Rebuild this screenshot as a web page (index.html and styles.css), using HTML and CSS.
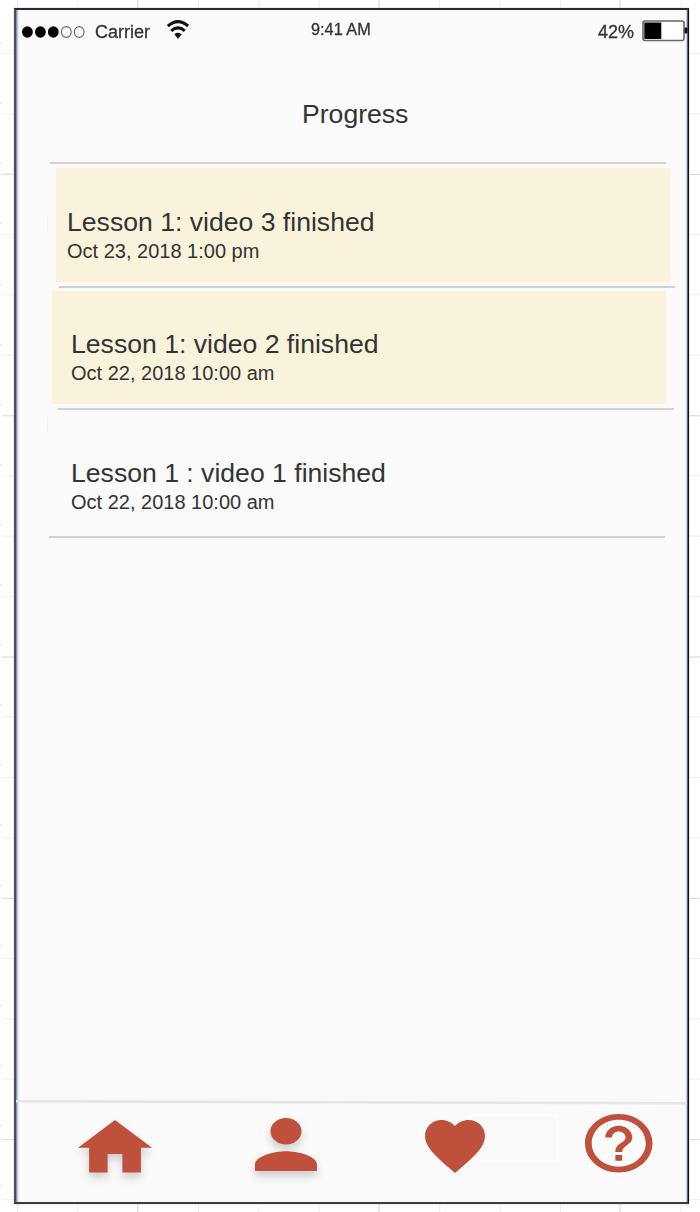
FILE: index.html
```html
<!DOCTYPE html>
<html lang="en">
<head>
<meta charset="utf-8">
<title>Progress</title>
<link rel="stylesheet" href="styles.css">
</head>
<body>
<div class="canvas">
  <div class="ruler"></div>
  <main class="phone">
    <header class="status">
      <div class="carrier">
        <svg class="signal" viewBox="0 0 64 14"><g fill="#000"><ellipse cx="5.4" cy="7" rx="5.4" ry="5.8"/><ellipse cx="18.4" cy="7" rx="5.4" ry="5.8"/><ellipse cx="31.3" cy="7" rx="5.4" ry="5.8"/></g><g fill="none" stroke="#666" stroke-width="1.1"><ellipse cx="44.3" cy="7" rx="4.9" ry="5.4"/><ellipse cx="57.2" cy="7" rx="4.9" ry="5.4"/></g></svg>
        <span class="carrier-name">Carrier</span>
        <svg class="wifi" viewBox="0 0 22 19"><g fill="none" stroke="#111" stroke-width="3"><path d="M.8 6Q11-2.8 21.2 6"/><path d="M4.2 10.8Q11 5 17.8 10.8"/></g><path d="M7.4 14.2Q11 11.4 14.6 14.2L11 19Z" fill="#111"/></svg>
      </div>
      <span class="clock">9:41 AM</span>
      <div class="power">
        <span class="percent">42%</span>
        <svg class="battery" viewBox="0 0 46 22"><rect x="1" y="1" width="41" height="19.5" rx="2" fill="#fff" stroke="#666" stroke-width="1.6"/><rect x="2.3" y="2.5" width="17" height="16.5" fill="#000"/><rect x="42.5" y="7.5" width="3" height="6" rx="1" fill="#111"/></svg>
      </div>
    </header>
    <h1 class="title">Progress</h1>
    <section class="list">
      <hr class="rule rule-top">
      <article class="item item-first"><h2>Lesson 1: video 3 finished</h2><p>Oct 23, 2018 1:00 pm</p></article>
      <hr class="rule rule-first">
      <article class="item item-second"><h2>Lesson 1: video 2 finished</h2><p>Oct 22, 2018 10:00 am</p></article>
      <hr class="rule rule-second">
      <article class="item item-third"><h2>Lesson 1 : video 1 finished</h2><p>Oct 22, 2018 10:00 am</p></article>
      <hr class="rule rule-third">
    </section>
    <svg class="divider" viewBox="0 0 671 5"><path d="M0 1.3L671 3.2" stroke="#e5e5e6" stroke-width="2.4"/></svg>
    <nav class="tabs">
      <svg class="tab home" viewBox="2 3 20 17" preserveAspectRatio="none"><path d="M10 20v-6h4v6h5v-8h3L12 3 2 12h3v8z"/></svg>
      <svg class="tab person" viewBox="4 4 16 16" preserveAspectRatio="none"><path d="M12 12c2.21 0 4-1.79 4-4s-1.79-4-4-4-4 1.79-4 4 1.79 4 4 4zm0 2c-2.67 0-8 1.34-8 4v2h16v-2c0-2.66-5.33-4-8-4z"/></svg>
      <div class="favorite">
        <span class="ghost"></span>
        <svg class="tab heart" viewBox="2 3 20 18.35" preserveAspectRatio="none"><path d="M12 21.35l-1.45-1.32C5.4 15.36 2 12.28 2 8.5 2 5.42 4.42 3 7.5 3c1.74 0 3.41.81 4.5 2.09C13.09 3.81 14.76 3 16.5 3 19.58 3 22 5.42 22 8.5c0 3.78-3.4 6.86-8.55 11.54L12 21.35z"/></svg>
      </div>
      <svg class="tab help" viewBox="2 2 20 20" preserveAspectRatio="none"><path d="M11 18h2v-2h-2v2zm1-16C6.48 2 2 6.48 2 12s4.48 10 10 10 10-4.48 10-10S17.52 2 12 2zm0 18c-4.41 0-8-3.59-8-8s3.59-8 8-8 8 3.59 8 8-3.59 8-8 8zm0-14c-2.21 0-4 1.79-4 4h2c0-1.1.9-2 2-2s2 .9 2 2c0 2-3 1.75-3 5h2c0-2.25 3-2.5 3-5 0-2.21-1.79-4-4-4z"/></svg>
    </nav>
  </main>
</div>
</body>
</html>
```
FILE: styles.css
```css
* { box-sizing: border-box; }
body {
  margin: 0;
  color: #333;
  font-family: "Liberation Sans", Arial, sans-serif;
}
.canvas {
  position: relative;
  width: 700px;
  height: 1212px;
  padding: 8px 0 0 14px;
  overflow: hidden;
  background-color: #fff;
  background-image:
    linear-gradient(#dcdcdc 1px, transparent 1px),
    linear-gradient(90deg, #dcdcdc 1px, transparent 1px),
    linear-gradient(#efefef 1px, transparent 1px),
    linear-gradient(90deg, #ececec 1px, transparent 1px);
  background-size: 100% 241.3px, 241.3px 100%, 100% 60.33px, 60.33px 100%;
  background-position: 0 174px, 137px 0, 0 53px, 17px 0;
}
.ruler {
  position: absolute;
  left: 0;
  top: 0;
  width: 2px;
  height: 1212px;
  background: repeating-linear-gradient(#fff 0 59.1px, #e2e2e2 59.1px 60.1px) 0 -16px / 100% 1300px;
}
.phone {
  display: flex;
  flex-direction: column;
  width: 675px;
  height: 1196px;
  border: 2px solid #242628;
  border-left-color: #4a4f57;
  border-right-width: 1px;
  border-right-color: #0c0f14;
  border-top-color: #29292b;
  border-bottom-color: #3a3d3d;
  background: #fafafa;
  box-shadow: inset 1px 0 #8299b3, inset 2px 0 #b9c9dc, inset 3px 0 #e4ebf4, inset -1px 0 #566b82, inset -2px 0 #c3d0df, 0 0 1px #999;
}
.status {
  display: grid;
  grid-template-columns: 295px 1fr 92px;
  height: 46px;
  padding: 0 0 0 6px;
  align-items: start;
  filter: blur(.55px);
  -webkit-text-stroke: .3px #333;
}
.carrier { display: flex; }
.signal { width: 64px; height: 14px; margin-top: 15px; }
.carrier-name { margin: 11px 0 0 9px; font-size: 18px; line-height: 22px; width: 72px; }
.wifi { width: 22px; height: 19px; margin-top: 10px; }
.clock { padding-top: 9px; font-size: 16.3px; line-height: 20px; margin-left: -6px; }
.power { display: flex; margin-left: 2px; }
.percent { width: 45px; padding-top: 11px; font-size: 18px; line-height: 22px; }
.battery { width: 46px; height: 22px; margin-top: 10px; flex: none; }
.title {
  margin: 43px 0 0 286px;
  height: 63px;
  font-size: 26.6px;
  font-weight: 400;
  line-height: 30px;
}
.list {
  display: flex;
  flex-direction: column;
  height: 938px;
  background:
    linear-gradient(#f2f2f2, #f2f2f2) 31px 54px / 1px 16px no-repeat,
    linear-gradient(#f0f0f0, #f0f0f0) 31px 255px / 1px 16px no-repeat;
}
.rule { flex: none; width: 616px; height: 2px; margin: 0; border: 0; background: #d3d3d6; }
.rule-top { margin: 0 0 4px 34px; }
.rule-first { margin: 4px 0 3px 43px; background: #cccdd5; }
.rule-second { margin: 4px 0 0 42px; }
.rule-third { margin-left: 33px; }
.item { flex: none; width: 614px; height: 114px; background: #faf3dc; }
.item h2 { margin: 0; font-size: 26.6px; font-weight: 400; line-height: 30px; white-space: nowrap; }
.item p { margin: 2px 0 0; font-size: 20px; line-height: 24px; }
.item-first { margin-left: 40px; padding: 39px 0 0 11px; }
.item-second { height: 113px; margin-left: 36px; padding: 38px 0 0 19px; }
.item-third { height: 125.5px; margin-left: 36px; padding: 48px 0 0 19px; background: none; }
.divider { flex: none; width: 671px; height: 5px; }
.tabs { display: flex; align-items: flex-start; padding-left: 62px; }
.tab { display: block; flex: none; fill: #bf503b; filter: blur(.4px); }
.home, .person { filter: blur(.4px) drop-shadow(0 5px 4px rgba(0, 0, 0, .18)); }
.home { width: 74px; height: 52.5px; margin-top: 15px; }
.person { width: 62px; height: 53px; margin: 13px 0 0 103px; }
.favorite { position: relative; margin: 15.3px 0 0 108px; }
.heart { position: relative; width: 60px; height: 53px; }
.ghost {
  position: absolute;
  left: 44px;
  top: -6px;
  width: 90px;
  height: 48px;
  border: 2px solid #fff;
  border-radius: 4px;
  filter: blur(.8px);
}
.help { width: 67.5px; height: 58.5px; margin: 9.3px 0 0 100px; }
```
